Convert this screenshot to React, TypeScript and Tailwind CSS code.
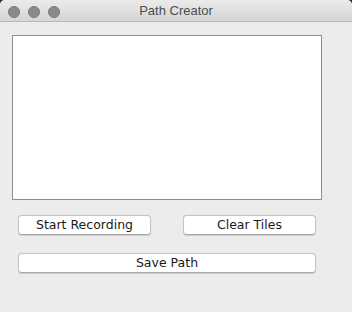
import React from "react";

function Btn({ label, className }: { label: string; className: string }) {
  return (
    <div
      className={`h-[20px] flex items-center justify-center bg-white rounded-[4px] border border-[#c4c4c4] border-b-[#a9a9a9] shadow-[0_0.5px_1px_rgba(0,0,0,0.15)] text-[12.5px] text-[#1a1a1a] leading-none pt-[1px] ${className}`}
      style={{ fontFamily: '"DejaVu Sans", "Liberation Sans", sans-serif' }}
    >
      {label}
    </div>
  );
}

export default function App() {
  return (
    <div className="w-[352px] h-[312px] bg-[#2a2a2a]">
      <div className="w-full h-full bg-[#ececec] rounded-t-[5px] overflow-hidden flex flex-col">
        <div className="h-[22px] shrink-0 relative flex items-center justify-center bg-gradient-to-b from-[#ebebeb] to-[#d5d5d5] border-b border-[#b9b9b9]">
          <div className="absolute left-[8px] top-[6px] flex gap-[8px]">
            <div className="w-[12px] h-[12px] rounded-full bg-[#8a8a8a] border border-[#7a7a7a]" />
            <div className="w-[12px] h-[12px] rounded-full bg-[#8a8a8a] border border-[#7a7a7a]" />
            <div className="w-[12px] h-[12px] rounded-full bg-[#8a8a8a] border border-[#7a7a7a]" />
          </div>
          <span
            className="text-[13px] text-[#4d4d4d] leading-none"
            style={{ fontFamily: '"Liberation Sans", Arial, sans-serif' }}
          >
            Path Creator
          </span>
        </div>
        <div className="pl-[12px] pt-[13px]">
          <div className="w-[310px] h-[165px] bg-white border border-[#8e8e8e]" />
        </div>
        <div className="pl-[18px] pt-[15px] flex gap-[32px]">
          <Btn label="Start Recording" className="w-[133px]" />
          <Btn label="Clear Tiles" className="w-[133px]" />
        </div>
        <div className="pl-[18px] pt-[18px]">
          <Btn label="Save Path" className="w-[298px]" />
        </div>
      </div>
    </div>
  );
}
